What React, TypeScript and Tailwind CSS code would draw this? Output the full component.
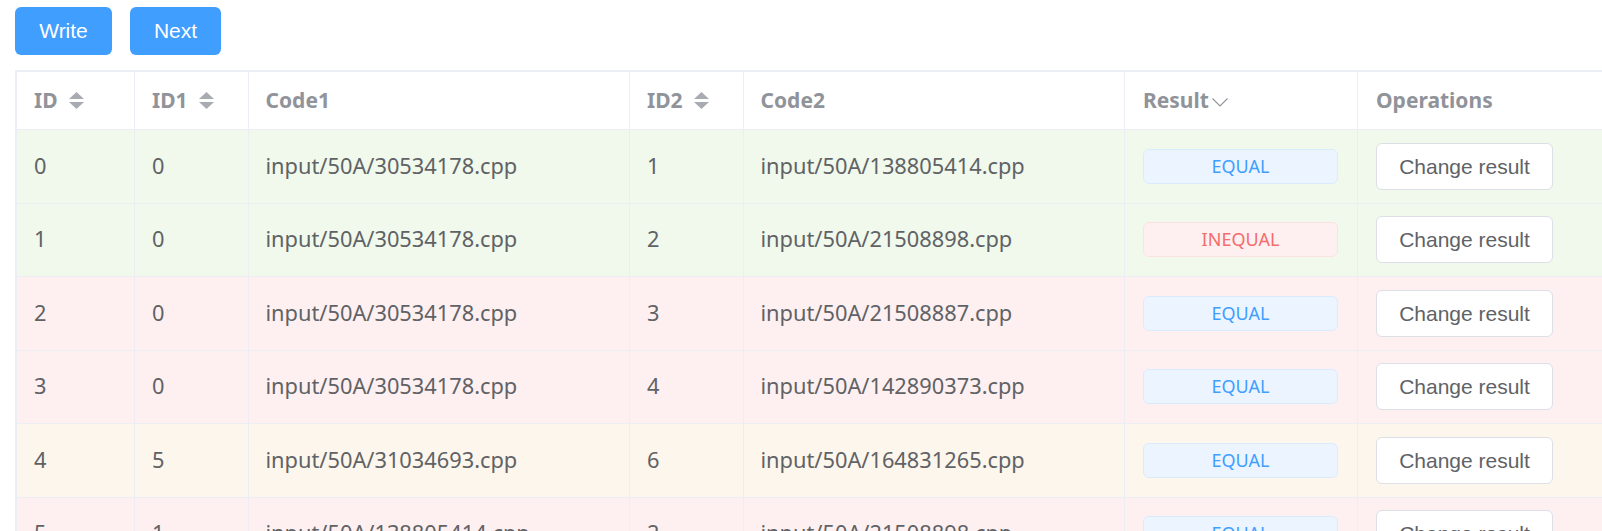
import React from 'react';

type Row = {
  id: number;
  id1: number;
  code1: string;
  id2: number;
  code2: string;
  result: 'EQUAL' | 'INEQUAL';
  tone: 'green' | 'red' | 'orange';
};

const rows: Row[] = [
  { id: 0, id1: 0, code1: 'input/50A/30534178.cpp', id2: 1, code2: 'input/50A/138805414.cpp', result: 'EQUAL', tone: 'green' },
  { id: 1, id1: 0, code1: 'input/50A/30534178.cpp', id2: 2, code2: 'input/50A/21508898.cpp', result: 'INEQUAL', tone: 'green' },
  { id: 2, id1: 0, code1: 'input/50A/30534178.cpp', id2: 3, code2: 'input/50A/21508887.cpp', result: 'EQUAL', tone: 'red' },
  { id: 3, id1: 0, code1: 'input/50A/30534178.cpp', id2: 4, code2: 'input/50A/142890373.cpp', result: 'EQUAL', tone: 'red' },
  { id: 4, id1: 5, code1: 'input/50A/31034693.cpp', id2: 6, code2: 'input/50A/164831265.cpp', result: 'EQUAL', tone: 'orange' },
  { id: 5, id1: 1, code1: 'input/50A/138805414.cpp', id2: 2, code2: 'input/50A/21508898.cpp', result: 'EQUAL', tone: 'red' },
];

const toneBg = {
  green: 'bg-[#f0f9eb]',
  red: 'bg-[#fef0f0]',
  orange: 'bg-[#fdf6ec]',
};

const SortCaret = () => (
  <svg width="15" height="17" viewBox="0 0 15 17" className="ml-[11px] shrink-0">
    <polygon points="0,7 7.5,0 15,7" fill="#a8abb2" />
    <polygon points="0,10 15,10 7.5,17" fill="#a8abb2" />
  </svg>
);

const FilterArrow = () => (
  <svg width="16" height="9" viewBox="0 0 16 9" className="ml-[3px] mt-[3px] shrink-0">
    <polyline points="0.5,0.5 8,8 15.5,0.5" fill="none" stroke="#909399" strokeWidth="1.1" />
  </svg>
);

const cols = ['w-[118px]', 'w-[113.5px]', 'w-[381.5px]', 'w-[113.5px]', 'w-[381.5px]', 'w-[233px]', 'w-[260px]'];

const cellBase = 'shrink-0 flex items-center border-r border-[#ebeef5] pl-[17px] pr-[16px]';

export default function App() {
  return (
    <div className="w-[1602px] h-[531px] overflow-hidden bg-white" style={{ fontFamily: '"Noto Sans", sans-serif' }}>
      <div className="flex gap-[18px] pl-[15px] pt-[7px]" style={{ fontFamily: '"Liberation Sans", Arial, sans-serif' }}>
        <button className="h-[48px] w-[97px] rounded-[6px] bg-[#409eff] text-white text-[21px]">Write</button>
        <button className="h-[48px] w-[91px] rounded-[6px] bg-[#409eff] text-white text-[21px]">Next</button>
      </div>

      <div className="ml-[15px] mt-[15px] w-[1620px] border-t-2 border-l-2 border-[#ebeef5]">
        {/* header */}
        <div className="flex h-[58px] border-b border-[#ebeef5] bg-white text-[21px] font-bold text-[#909399]">
          <div className={`${cellBase} ${cols[0]} pl-[16px]`}>ID<SortCaret /></div>
          <div className={`${cellBase} ${cols[1]}`}>ID1<SortCaret /></div>
          <div className={`${cellBase} ${cols[2]}`}>Code1</div>
          <div className={`${cellBase} ${cols[3]}`}>ID2<SortCaret /></div>
          <div className={`${cellBase} ${cols[4]}`}>Code2</div>
          <div className={`${cellBase} ${cols[5]} pl-[18px]`}>Result<FilterArrow /></div>
          <div className={`${cellBase} ${cols[6]} pl-[18px]`}>Operations</div>
        </div>

        {rows.map((r) => (
          <div key={r.id} className={`flex h-[73.5px] border-b border-[#ebeef5] text-[21.8px] text-[#606266] ${toneBg[r.tone]}`}>
            <div className={`${cellBase} ${cols[0]} pl-[16px]`}>{r.id}</div>
            <div className={`${cellBase} ${cols[1]}`}>{r.id1}</div>
            <div className={`${cellBase} ${cols[2]}`}>{r.code1}</div>
            <div className={`${cellBase} ${cols[3]}`}>{r.id2}</div>
            <div className={`${cellBase} ${cols[4]}`}>{r.code2}</div>
            <div className={`${cellBase} ${cols[5]} pl-[18px] pr-[19px]`}>
              {r.result === 'EQUAL' ? (
                <span className="flex h-[35px] w-full items-center justify-center rounded-[6px] border border-[#d9ecff] bg-[#ecf5ff] text-[18px] text-[#409eff]">
                  EQUAL
                </span>
              ) : (
                <span className="flex h-[35px] w-full items-center justify-center rounded-[6px] border border-[#fde2e2] bg-[#fef0f0] text-[18px] text-[#f56c6c]">
                  INEQUAL
                </span>
              )}
            </div>
            <div className={`${cellBase} ${cols[6]} pl-[18px]`}>
              <button
                className="h-[47px] w-[177px] rounded-[6px] border border-[#dcdfe6] bg-white text-[21px] text-[#606266]"
                style={{ fontFamily: '"Liberation Sans", Arial, sans-serif' }}
              >
                Change result
              </button>
            </div>
          </div>
        ))}
      </div>
    </div>
  );
}
